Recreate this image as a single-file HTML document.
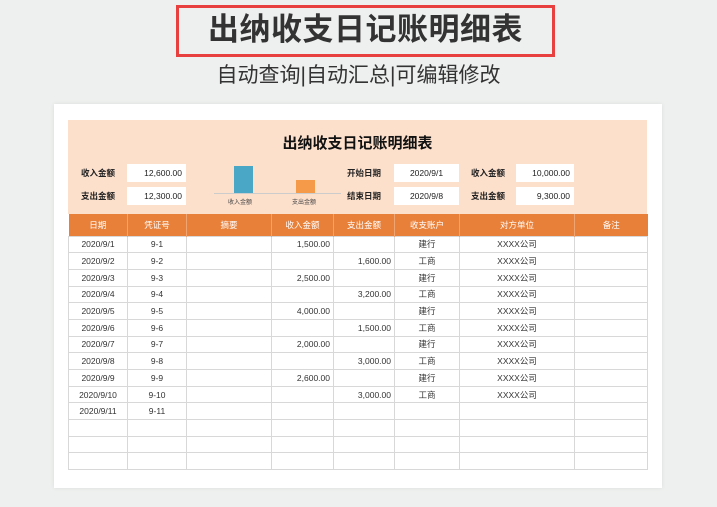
<!DOCTYPE html><html><head><meta charset="utf-8"><style>
*{margin:0;padding:0;box-sizing:border-box}
body{width:717px;height:507px;background:#eef0ef;font-family:"Liberation Sans","Noto Sans CJK SC",sans-serif;position:relative;overflow:hidden}
.abs{position:absolute}
.box{position:absolute;border:3px solid #e8403f;left:176px;top:5px;width:379px;height:52px}
.t1{left:176px;top:4px;width:379px;text-align:center;font-size:31px;font-weight:bold;color:#333;line-height:52px;letter-spacing:0.5px}
.t2{left:0;width:717px;top:62px;text-align:center;font-size:21px;color:#333;line-height:28px}
.card{left:54px;top:104px;width:608px;height:384px;background:#fff;box-shadow:0 0 4px rgba(0,0,0,.08)}
.peach{left:68px;top:120px;width:579px;height:94px;background:#fde0cc}
.lbl{font-size:8.5px;font-weight:bold;color:#222;line-height:18px}
.val{background:#fff;font-size:8.5px;color:#222;line-height:18px;text-align:right;padding-right:4px;height:18px}
table{position:absolute;left:68px;top:214px;border-collapse:collapse;font-size:8.5px;color:#333}
th{background:#e8803a;color:#fff;font-weight:normal;height:22px;border-left:1px solid #f0a570}
td{height:16.7px;border:1px solid #d8d8d8;text-align:center;padding:0 3px}
td.r{text-align:right}
</style></head><body>
<div class="box"></div>
<div class="abs t1">出纳收支日记账明细表</div>
<div class="abs t2">自动查询|自动汇总|可编辑修改</div>
<div class="abs card"></div>
<div class="abs peach"></div>
<div class="abs" style="left:68px;top:132px;width:579px;text-align:center;font-size:15px;font-weight:bold;color:#111">出纳收支日记账明细表</div>
<div class="abs lbl" style="left:81px;top:164px">收入金额</div>
<div class="abs lbl" style="left:81px;top:187px">支出金额</div>
<div class="abs val" style="left:127px;top:164px;width:59px">12,600.00</div>
<div class="abs val" style="left:127px;top:187px;width:59px">12,300.00</div>
<div class="abs" style="left:234px;top:166px;width:19px;height:27px;background:#4aa8c6"></div>
<div class="abs" style="left:296px;top:180px;width:19px;height:13px;background:#f59a48"></div>
<div class="abs" style="left:214px;top:193px;width:127px;height:1px;background:#ccc"></div>
<div class="abs" style="left:228px;top:197px;font-size:6px;color:#444">收入金额</div>
<div class="abs" style="left:292px;top:197px;font-size:6px;color:#444">支出金额</div>
<div class="abs lbl" style="left:347px;top:164px">开始日期</div>
<div class="abs lbl" style="left:347px;top:187px">结束日期</div>
<div class="abs val" style="left:394px;top:164px;width:65px;text-align:center;padding:0">2020/9/1</div>
<div class="abs val" style="left:394px;top:187px;width:65px;text-align:center;padding:0">2020/9/8</div>
<div class="abs lbl" style="left:471px;top:164px">收入金额</div>
<div class="abs lbl" style="left:471px;top:187px">支出金额</div>
<div class="abs val" style="left:516px;top:164px;width:58px">10,000.00</div>
<div class="abs val" style="left:516px;top:187px;width:58px">9,300.00</div>
<table>
<colgroup><col style="width:59px"><col style="width:59px"><col style="width:85px"><col style="width:62px"><col style="width:61px"><col style="width:65px"><col style="width:115px"><col style="width:73px"></colgroup>
<tr><th style="border-left:none">日期</th><th>凭证号</th><th>摘要</th><th>收入金额</th><th>支出金额</th><th>收支账户</th><th>对方单位</th><th>备注</th></tr>
<tr><td>2020/9/1</td><td>9-1</td><td></td><td class="r">1,500.00</td><td></td><td>建行</td><td>XXXX公司</td><td></td></tr>
<tr><td>2020/9/2</td><td>9-2</td><td></td><td></td><td class="r">1,600.00</td><td>工商</td><td>XXXX公司</td><td></td></tr>
<tr><td>2020/9/3</td><td>9-3</td><td></td><td class="r">2,500.00</td><td></td><td>建行</td><td>XXXX公司</td><td></td></tr>
<tr><td>2020/9/4</td><td>9-4</td><td></td><td></td><td class="r">3,200.00</td><td>工商</td><td>XXXX公司</td><td></td></tr>
<tr><td>2020/9/5</td><td>9-5</td><td></td><td class="r">4,000.00</td><td></td><td>建行</td><td>XXXX公司</td><td></td></tr>
<tr><td>2020/9/6</td><td>9-6</td><td></td><td></td><td class="r">1,500.00</td><td>工商</td><td>XXXX公司</td><td></td></tr>
<tr><td>2020/9/7</td><td>9-7</td><td></td><td class="r">2,000.00</td><td></td><td>建行</td><td>XXXX公司</td><td></td></tr>
<tr><td>2020/9/8</td><td>9-8</td><td></td><td></td><td class="r">3,000.00</td><td>工商</td><td>XXXX公司</td><td></td></tr>
<tr><td>2020/9/9</td><td>9-9</td><td></td><td class="r">2,600.00</td><td></td><td>建行</td><td>XXXX公司</td><td></td></tr>
<tr><td>2020/9/10</td><td>9-10</td><td></td><td></td><td class="r">3,000.00</td><td>工商</td><td>XXXX公司</td><td></td></tr>
<tr><td>2020/9/11</td><td>9-11</td><td></td><td></td><td></td><td></td><td></td><td></td></tr>
<tr><td></td><td></td><td></td><td></td><td></td><td></td><td></td><td></td></tr>
<tr><td></td><td></td><td></td><td></td><td></td><td></td><td></td><td></td></tr>
<tr><td></td><td></td><td></td><td></td><td></td><td></td><td></td><td></td></tr>
</table>
</body></html>
